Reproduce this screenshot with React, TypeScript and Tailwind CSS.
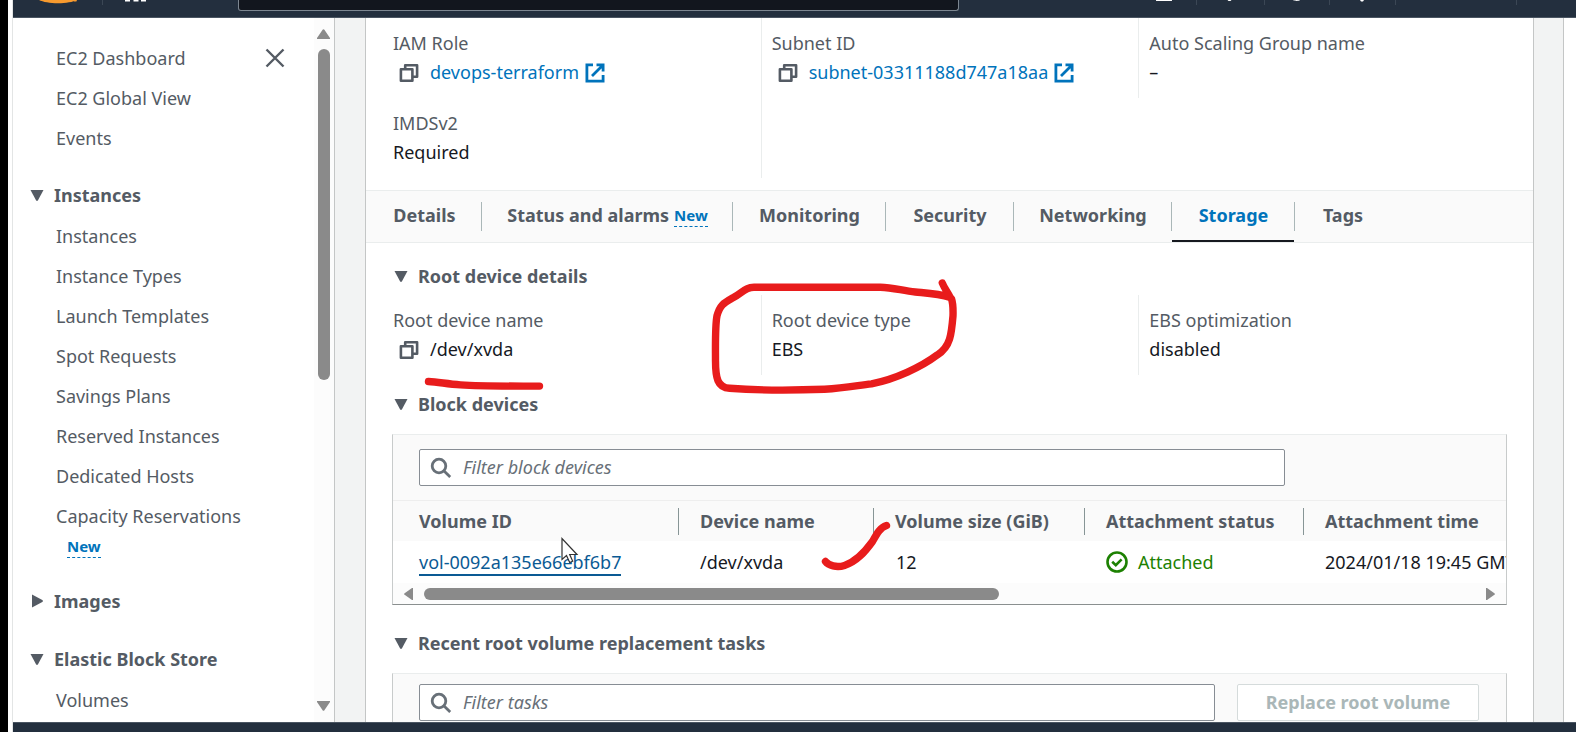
import type { ReactNode } from "react";

function Caret({ open = true }: { open?: boolean }) {
  return (
    <svg width="14" height="14" viewBox="0 0 14 14" className="shrink-0" aria-hidden="true">
      <path
        d={open ? "M.5 2h13L8 12.200a1.200 1.200 0 0 1-2 0z" : "M2 .5v13L12.300 8a1.200 1.200 0 0 0 0-2z"}
        fill="#545b64"
      />
    </svg>
  );
}

function CopyIcon() {
  return (
    <svg width="20" height="20" viewBox="0 0 20 20" fill="none" stroke="#545b64" strokeWidth="2.6" aria-hidden="true">
      <path d="M1.900 6.300h11.500v11.500H1.900z" strokeLinejoin="round" />
      <path d="M6.200 6V2.300h11.900v11.500h-4.500" strokeLinejoin="round" />
    </svg>
  );
}

function ExternalIcon() {
  return (
    <svg width="20" height="20" viewBox="0 0 20 20" fill="none" stroke="#0073bb" strokeWidth="2.8" aria-hidden="true">
      <path d="M8 1.900H1.900v16.200h16.200V12" />
      <path d="M11.500 1.900h6.600v6.600M18 2L7 13" />
    </svg>
  );
}

function SearchIcon() {
  return (
    <svg width="22" height="22" viewBox="0 0 22 22" fill="none" stroke="#687078" strokeWidth="2.800" aria-hidden="true">
      <circle cx="9" cy="9" r="6.800" />
      <path d="M13.800 13.800l6.400 6.200" />
    </svg>
  );
}

function NewBadge() {
  return (
    <span className="inline-block border-b border-dashed border-[#0073bb] text-[15px] leading-[22px] font-bold text-[#0073bb]">
      New
    </span>
  );
}

function NavSection({ title, open = true, children }: { title: string; open?: boolean; children?: ReactNode }) {
  return (
    <section className="mt-4">
      <h2>
        <button type="button" className="flex h-[42px] items-center gap-[10px] font-bold" aria-expanded={open}>
          <Caret open={open} />
          {title}
        </button>
      </h2>
      {children && <ul>{children}</ul>}
    </section>
  );
}

function NavItem({ label }: { label: string }) {
  return (
    <li className="flex h-10 items-center pl-[26px]">
      <a href="#">{label}</a>
    </li>
  );
}

function Sidebar() {
  const instanceLinks = [
    "Instances",
    "Instance Types",
    "Launch Templates",
    "Spot Requests",
    "Savings Plans",
    "Reserved Instances",
    "Dedicated Hosts",
  ];
  return (
    <aside className="flex w-[322px] shrink-0 border-r border-[#c4c6c6] bg-white text-[#545b64]">
      <nav className="min-w-0 flex-1 overflow-hidden pt-5 pl-[17px]" aria-label="EC2">
        <ul>
          <li className="flex h-10 items-center justify-between pr-[29px] pl-[26px]">
            <a href="#">EC2 Dashboard</a>
            <button type="button" aria-label="Close navigation">
              <svg width="20" height="20" viewBox="0 0 20 20" fill="none" stroke="#545b64" strokeWidth="2.400">
                <path d="M1.500 1.500l17 17M18.500 1.500l-17 17" />
              </svg>
            </button>
          </li>
          <NavItem label="EC2 Global View" />
          <NavItem label="Events" />
        </ul>
        <NavSection title="Instances">
          {instanceLinks.map((label) => (
            <NavItem key={label} label={label} />
          ))}
          <li className="pt-1.5 pb-[6px] pl-[26px] leading-7">
            <a href="#">Capacity Reservations</a>
            <div className="flex h-7 items-end pl-[11px]">
              <NewBadge />
            </div>
          </li>
        </NavSection>
        <NavSection title="Images" open={false} />
        <NavSection title="Elastic Block Store">
          <NavItem label="Volumes" />
        </NavSection>
      </nav>
      <div className="flex w-5 flex-col items-center bg-[#fcfcfc] pt-[11px] pr-px pb-[11px]" aria-hidden="true">
        <svg width="13" height="10" viewBox="0 0 13 10">
          <path d="M5.600.8a1 1 0 0 1 1.800 0L13 9v1H0V9z" fill="#8a8a8a" />
        </svg>
        <div className="mt-[10px] h-[331px] w-3 rounded-full bg-[#8a8a8a]" />
        <svg width="13" height="10" viewBox="0 0 13 10" className="mt-auto">
          <path d="M5.600 9.200a1 1 0 0 0 1.800 0L13 1V0H0v1z" fill="#8a8a8a" />
        </svg>
      </div>
    </aside>
  );
}

function Field({ label, children }: { label: string; children: ReactNode }) {
  return (
    <dl className="pt-[11px] pb-[11px] pl-[10px] leading-[29px]">
      <dt className="text-[#545b64]">{label}</dt>
      <dd className="text-[#16191f]">{children}</dd>
    </dl>
  );
}

function Copyable({ children }: { children: ReactNode }) {
  return (
    <span className="flex items-center">
      <button type="button" aria-label="Copy" className="mr-[11px] ml-[6px]">
        <CopyIcon />
      </button>
      {children}
    </span>
  );
}

function ExternalLink({ children }: { children: ReactNode }) {
  return (
    <a href="#" className="flex items-center gap-[6px] text-[#0073bb]">
      {children}
      <ExternalIcon />
    </a>
  );
}

function SectionHeading({ children }: { children: ReactNode }) {
  return (
    <h3>
      <button type="button" className="flex h-9 items-center gap-[10px] pl-[2px] font-bold text-[#545b64]">
        <Caret />
        {children}
      </button>
    </h3>
  );
}

function FilterBox({ id, placeholder }: { id: string; placeholder: string }) {
  return (
    <label
      htmlFor={id}
      className="flex h-[37px] min-w-0 flex-1 items-center gap-[11px] rounded-[2px] border border-[#878d94] bg-white pl-[10px]"
    >
      <SearchIcon />
      <input
        id={id}
        type="text"
        aria-label={placeholder}
        placeholder={placeholder}
        className="min-w-0 flex-1 bg-transparent outline-none placeholder:text-[#687078] placeholder:italic"
      />
    </label>
  );
}

function Tabs() {
  const tabs = [
    { name: "Details", width: "w-[115px]" },
    { name: "Status and alarms", width: "w-[251px]", isNew: true },
    { name: "Monitoring", width: "w-[153px]" },
    { name: "Security", width: "w-[128px]" },
    { name: "Networking", width: "w-[158px]" },
    { name: "Storage", width: "w-[123px]", active: true },
    { name: "Tags", width: "w-[95px]" },
  ];
  return (
    <div role="tablist" className="flex h-[53px] border-y border-[#eaeded] bg-[#fafafa] pl-px font-bold">
      {tabs.map((tab, i) => (
        <div key={tab.name} className={`flex items-center ${tab.width}`}>
          <button
            type="button"
            role="tab"
            aria-selected={!!tab.active}
            className={`flex h-full flex-1 items-center justify-center gap-[5px] border-b-2 pl-px whitespace-nowrap ${
              tab.active ? "border-b-[#16191f] text-[#0073bb]" : "border-b-transparent text-[#545b64]"
            }`}
          >
            {tab.name}
            {tab.isNew && <NewBadge />}
          </button>
          {i < tabs.length - 1 && <span className="h-[29px] w-px shrink-0 bg-[#aab7b8]" />}
        </div>
      ))}
    </div>
  );
}

function HeadCell({ children, last }: { children: ReactNode; last?: boolean }) {
  return (
    <th scope="col" className="p-0 text-left font-bold">
      <div className="flex h-10 items-center pl-[21px] whitespace-nowrap">
        {children}
        {!last && <span className="ml-auto h-[27px] w-px bg-[#879596]" />}
      </div>
    </th>
  );
}

function BlockDevices() {
  return (
    <div className="border border-x-[#c8cbcb] border-t-[#eaeded] border-b-[#8a8f8f] bg-[#fafafa]">
      <div className="flex py-[14px] pr-[221px] pl-[26px]">
        <FilterBox id="filter-devices" placeholder="Filter block devices" />
      </div>
      <div className="overflow-hidden">
        <table className="w-[1500px] table-fixed border-collapse">
          <colgroup>
            <col className="w-[286px]" />
            <col className="w-[195px]" />
            <col className="w-[211px]" />
            <col className="w-[219px]" />
            <col />
          </colgroup>
          <thead className="border-t border-[#eeeeee] text-[#545b64]">
            <tr>
              <th scope="col" className="p-0 text-left font-bold">
                <div className="flex h-10 items-center pl-[26px]">
                  Volume ID
                  <span className="ml-auto h-[27px] w-px bg-[#879596]" />
                </div>
              </th>
              <HeadCell>Device name</HeadCell>
              <HeadCell>Volume size (GiB)</HeadCell>
              <HeadCell>Attachment status</HeadCell>
              <HeadCell last>Attachment time</HeadCell>
            </tr>
          </thead>
          <tbody className="bg-white text-[#16191f]">
            <tr className="h-[42px]">
              <td className="p-0 pl-[26px]">
                <a href="#" className="inline-block border-b-2 border-[#0a5a94] leading-[24px] text-[#0a5a94]">
                  vol-0092a135e66ebf6b7
                </a>
              </td>
              <td className="p-0 pl-[21px]">/dev/xvda</td>
              <td className="p-0 pl-[22px]">12</td>
              <td className="p-0 pl-[21px]">
                <span className="flex items-center gap-[10px] text-[#1d8102]">
                  <svg width="22" height="22" viewBox="0 0 22 22" fill="none" stroke="#1d8102" strokeWidth="2.600" aria-hidden="true">
                    <circle cx="11" cy="11" r="9.500" />
                    <path d="M6.200 10.800l3.600 3.400 5.800-5.800" />
                  </svg>
                  Attached
                </span>
              </td>
              <td className="p-0 pl-[21px] whitespace-nowrap">2024/01/18 19:45 GMT</td>
            </tr>
          </tbody>
        </table>
      </div>
      <div className="flex h-[21px] items-center justify-between bg-[#fcfcfc] px-[11px]" aria-hidden="true">
        <svg width="9" height="12" viewBox="0 0 9 12" className="mr-[11px] shrink-0">
          <path d="M.6 5.200a1 1 0 0 0 0 1.600L8 12h1V0H8z" fill="#8a8a8a" />
        </svg>
        <div className="flex-1">
          <div className="h-3 w-[575px] rounded-full bg-[#8a8a8a]" />
        </div>
        <svg width="9" height="12" viewBox="0 0 9 12" className="ml-[11px] shrink-0">
          <path d="M8.400 5.200a1 1 0 0 1 0 1.600L1 12H0V0h1z" fill="#8a8a8a" />
        </svg>
      </div>
    </div>
  );
}

function Header() {
  return (
    <header className="flex h-[18px] shrink-0 items-start border-b border-[#4a5562] bg-[#232f3e]">
      <svg width="225" height="10" viewBox="0 0 225 10" className="shrink-0" aria-hidden="true">
        <path d="M26 0h38c-4 2-11 3.200-19 3.200S30 2 26 0zM61 0h3l-.6 1.400h-2.400z" fill="#f79a2e" />
        <path d="M89.500 0v5" stroke="#3b4755" />
        <path d="M112 0h5v1.500h-5zM120.500 0h5v1.500h-5zM128 0h5v1.500h-5z" fill="#fff" />
      </svg>
      <input
        type="search"
        aria-label="Search"
        className="h-[11px] w-[721px] rounded-b-[3px] border border-t-0 border-[#7d8791] bg-[#12161e] outline-none"
      />
      <svg width="400" height="10" viewBox="0 0 400 10" className="ml-[190px] shrink-0" aria-hidden="true">
        <path d="M7 0h16v.6a.6.6 0 0 1-.6.5H7.600a.6.6 0 0 1-.6-.5z" fill="#fff" />
        <path d="M47.500 0v5M115.500 0v5M180.500 0v5M246.500 0v5M367.500 0v5" stroke="#3b4755" />
        <path d="M78.500 0h4l-1 1h-2zM144 0h7c-1 1.200-5 1.200-7 0zM211 0h4l-1 1.400h-2z" fill="#fff" />
      </svg>
    </header>
  );
}

function Annotations() {
  return (
    <svg
      width="1576"
      height="732"
      viewBox="0 0 1576 732"
      fill="none"
      className="pointer-events-none absolute top-0 left-0"
      aria-hidden="true"
    >
      <path
        d="M562 538.500v21l4.500-4 3.200 7 3-1.300-3-6.700h7.300z"
        fill="#fff"
        stroke="#333"
        strokeWidth="1.200"
      />
      <g stroke="#e81c1c" strokeWidth="7.400" strokeLinecap="round" strokeLinejoin="round">
        <path d="M428.500 381.500c10 .6 18 2.300 32 3.400 24 1.500 54 1.200 79 1.200" />
        <path d="M942.300 283c2 5 4.700 8.500 8 14.500-12-4-22-4.300-35-5.500s-22-4.500-35-4.700H754c-9 0-11 5-21 10.500-9 5.200-13 7-16 18-2 10-1.500 33-1.500 45 0 17 2 27 14 27.500 26 2 67 2 95 1 20-1 31-3.500 47-5.500 24-4.500 50-17 66-29 13-8 14-21 15.500-39 .2-7 .2-12-1.500-17" />
        <path d="M825.500 561.500c3 4 11 6.500 19 4 12-4 20-13 28-24 5-9 8-14 14-16" />
      </g>
    </svg>
  );
}

export default function App() {
  return (
    <div className="relative flex h-screen overflow-hidden bg-white font-['Noto_Sans',sans-serif] text-[18px] leading-[27px]">
      <div className="w-2 shrink-0 bg-black" />
      <div className="w-[5px] shrink-0 border-r border-[#e3e5e5] bg-white" />
      <div className="flex min-w-0 flex-1 flex-col">
        <Header />
        <div className="flex min-h-0 flex-1 bg-[#f2f3f3]">
          <Sidebar />
          <main className="mr-[29px] ml-[30px] min-w-0 flex-1 overflow-hidden border-x border-[#c4c6c6] bg-white">
            <div className="grid grid-cols-3 items-stretch pr-[17px] pb-3 pl-[17px]">
              <div>
                <Field label="IAM Role">
                  <Copyable>
                    <ExternalLink>devops-terraform</ExternalLink>
                  </Copyable>
                </Field>
                <Field label="IMDSv2">Required</Field>
              </div>
              <div className="border-l border-[#eaeded]">
                <Field label="Subnet ID">
                  <Copyable>
                    <ExternalLink>subnet-03311188d747a18aa</ExternalLink>
                  </Copyable>
                </Field>
              </div>
              <div className="self-start border-l border-[#eaeded]">
                <Field label="Auto Scaling Group name">–</Field>
              </div>
            </div>

            <Tabs />

            <div className="pt-[15px] pr-[26px] pl-[26px]">
              <SectionHeading>Root device details</SectionHeading>
            </div>
            <div className="grid grid-cols-3 pt-px pr-[17px] pl-[17px]">
              <Field label="Root device name">
                <Copyable>/dev/xvda</Copyable>
              </Field>
              <div className="border-l border-[#eaeded]">
                <Field label="Root device type">EBS</Field>
              </div>
              <div className="border-l border-[#eaeded]">
                <Field label="EBS optimization">disabled</Field>
              </div>
            </div>

            <div className="flex flex-col gap-3 pt-[11px] pr-[26px] pl-[26px]">
              <SectionHeading>Block devices</SectionHeading>
              <BlockDevices />
            </div>

            <div className="flex flex-col gap-3 pt-5 pr-[26px] pl-[26px]">
              <SectionHeading>Recent root volume replacement tasks</SectionHeading>
              <div className="flex gap-[22px] border border-x-[#c8cbcb] border-t-[#eaeded] bg-[#fafafa] pt-[10px] pr-[27px] pb-16 pl-[26px]">
                <FilterBox id="filter-tasks" placeholder="Filter tasks" />
                <button
                  type="button"
                  disabled
                  className="h-[37px] w-[242px] rounded-[2px] border border-[#d5dbdb] bg-white font-bold text-[#aab7b8]"
                >
                  Replace root volume
                </button>
              </div>
            </div>
          </main>
          <div className="w-[13px] shrink-0 border-l border-[#c4c6c6] bg-white" />
        </div>
        <footer className="h-[10px] shrink-0 border-t border-[#4a5562] bg-[#232f3e]" />
      </div>
      <Annotations />
    </div>
  );
}
